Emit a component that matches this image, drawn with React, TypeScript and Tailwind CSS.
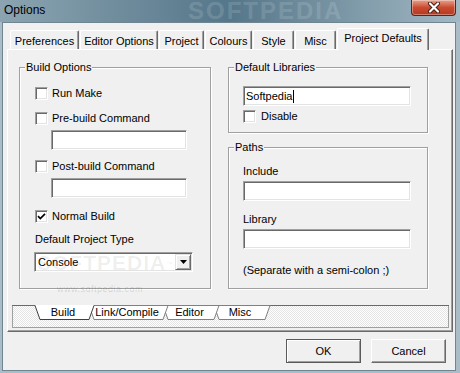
import React from "react";

const sunken =
  "border border-t-[#a0a0a0] border-l-[#a0a0a0] border-b-white border-r-white shadow-[inset_1px_1px_0_#696969,inset_-1px_-1px_0_#e3e3e3] bg-white";

function CheckBox({ checked = false }: { checked?: boolean }) {
  return (
    <span className={`flex h-[13px] w-[13px] shrink-0 items-center justify-center ${sunken}`}>
      {checked && (
        <svg width="9" height="9" viewBox="0 0 9 9">
          <path d="M1 4.2 L3.3 6.6 L8 1.8" fill="none" stroke="#000" strokeWidth="1.7" />
        </svg>
      )}
    </span>
  );
}

function CheckRow({ label, checked, className = "" }: { label: string; checked?: boolean; className?: string }) {
  return (
    <div className={`flex h-[13px] items-center gap-[4px] ${className}`}>
      <CheckBox checked={checked} />
      <span className="leading-[13px]">{label}</span>
    </div>
  );
}

function Group({
  title,
  className = "",
  inner = "",
  children,
}: {
  title: string;
  className?: string;
  inner?: string;
  children: React.ReactNode;
}) {
  return (
    <div
      className={`flex flex-col border border-[#a0a0a0] shadow-[inset_1px_1px_0_#fff,1px_1px_0_#fff] ${className}`}
    >
      <span className="-mt-[7px] ml-[5px] w-fit bg-[#f0f0f0] px-px leading-[13px]">{title}</span>
      <div className={`flex flex-col ${inner}`}>{children}</div>
    </div>
  );
}

function TextBox({ className = "", children }: { className?: string; children?: React.ReactNode }) {
  return <div className={`flex h-[20px] items-center pl-[2px] ${sunken} ${className}`}>{children}</div>;
}

function Tab({ label, w, selected }: { label: string; w: string; selected?: boolean }) {
  if (selected) {
    return (
      <div
        className={`relative z-10 -mb-px flex h-[22px] items-center justify-center rounded-t-[2px] border-l border-t border-r border-l-white border-t-white border-r-[#696969] bg-[#f0f0f0] pb-[2px] shadow-[inset_-1px_0_0_#a0a0a0] ${w}`}
      >
        {label}
      </div>
    );
  }
  return (
    <div
      className={`flex h-[19px] items-center justify-center rounded-t-[2px] border-l border-t border-r border-l-white border-t-white border-r-[#696969] bg-[#f0f0f0] pt-[2px] shadow-[inset_-1px_0_0_#a0a0a0] ${w}`}
    >
      {label}
    </div>
  );
}

function Button({ label, isDefault }: { label: string; isDefault?: boolean }) {
  const look = isDefault
    ? "border border-[#5a5a5a] shadow-[inset_1px_1px_0_#fff,inset_-1px_-1px_0_#a0a0a0]"
    : "border border-t-white border-l-white border-b-[#696969] border-r-[#696969] shadow-[inset_-1px_-1px_0_#a0a0a0]";
  return (
    <div className={`flex h-[24px] w-[75px] items-center justify-center bg-[#f0f0f0] ${look}`}>{label}</div>
  );
}

export default function App() {
  return (
    <div className="flex h-[373px] w-[460px] flex-col bg-[#a9bcc7] font-['Liberation_Sans',Arial,sans-serif] text-[11px] text-black">
      {/* title bar */}
      <div className="relative flex h-[22px] shrink-0 items-start justify-between bg-gradient-to-r from-[#8ca4b1] via-[#55778a] to-[#a3b8c3] pl-[4px]">
        <span className="mt-[3px] text-[12px] leading-[15px]">Options</span>
        <span className="pointer-events-none absolute left-[188px] top-0 text-[24px] font-bold leading-[22px] tracking-[2px] text-white/15">
          SOFTPEDIA
        </span>
        <div className="mr-[4px] flex h-[16px] w-[45px] items-center justify-center rounded-b-[4px] border border-t-0 border-[#5b2418] bg-gradient-to-b from-[#e6a08c] via-[#c94a30] to-[#b43a22] shadow-[inset_0_0_0_1px_rgba(255,255,255,0.35)]">
          <svg width="14" height="11" viewBox="0 0 14 11">
            <path d="M3 1.5 L11 9.5 M11 1.5 L3 9.5" stroke="#4a1a10" strokeWidth="4" strokeLinecap="round" />
            <path d="M3 1.5 L11 9.5 M11 1.5 L3 9.5" stroke="#fff" strokeWidth="2.2" strokeLinecap="round" />
          </svg>
        </div>
      </div>

      {/* client area */}
      <div className="mb-[2px] ml-[2px] mr-[4px] flex flex-1 flex-col border border-[#6f8592] bg-[#f0f0f0]">
        {/* tabs */}
        <div className="ml-[7px] mt-[5px] flex h-[21px] items-end gap-px">
          <Tab label="Preferences" w="w-[69px]" />
          <Tab label="Editor Options" w="w-[78px]" />
          <Tab label="Project" w="w-[45px]" />
          <Tab label="Colours" w="w-[47px]" />
          <Tab label="Style" w="w-[41px]" />
          <Tab label="Misc" w="w-[41px]" />
          <Tab label="Project Defaults" w="w-[92px]" selected />
        </div>

        {/* tab page */}
        <div className="ml-[4px] flex h-[283px] w-[446px] flex-col border border-l-white border-t-white border-b-[#696969] border-r-[#696969] pl-[11px] pt-[17px] shadow-[inset_-1px_-1px_0_#a0a0a0]">
          <div className="flex items-start gap-[17px]">
            <Group title="Build Options" className="relative h-[222px] w-[192px]" inner="pl-[15px]">
              <CheckRow label="Run Make" className="mt-[13px]" />
              <CheckRow label="Pre-build Command" className="mt-[12px]" />
              <TextBox className="ml-[16px] mt-[5px] w-[136px]" />
              <CheckRow label="Post-build Command" className="mt-[10px]" />
              <TextBox className="ml-[16px] mt-[5px] w-[136px]" />
              <CheckRow label="Normal Build" checked className="mt-[12px]" />
              <span className="mt-[10px] leading-[13px]">Default Project Type</span>
              <div className={`relative -ml-px mt-[6px] flex h-[20px] w-[159px] items-center justify-between pl-[3px] pr-[1px] ${sunken}`}>
                <span>Console</span>
                <span className="pointer-events-none absolute left-[2px] top-[0px] text-[21px] font-bold leading-[20px] tracking-[1px] text-black/[0.07]">
                  SOFTPEDIA<sup className="text-[7px]">™</sup>
                </span>
                <div className="flex h-[16px] w-[16px] items-center justify-center border border-t-[#e3e3e3] border-l-[#e3e3e3] border-b-[#696969] border-r-[#696969] bg-[#f0f0f0] shadow-[inset_1px_1px_0_#fff,inset_-1px_-1px_0_#a0a0a0]">
                  <svg width="7" height="4" viewBox="0 0 7 4">
                    <path d="M0 0 H7 L3.5 4 Z" fill="#000" />
                  </svg>
                </div>
              </div>
              <span className="pointer-events-none absolute bottom-[-8px] left-[37px] text-[9px] tracking-[0.5px] text-black/15">
                www.softpedia.com
              </span>
            </Group>

            <div className="flex flex-col gap-[14px]">
              <Group title="Default Libraries" className="h-[66px] w-[200px]" inner="pl-[14px]">
                <TextBox className="mt-[12px] w-[168px]">
                  <span>Softpedia</span>
                  <span className="ml-px h-[13px] w-px bg-black" />
                </TextBox>
                <div className="mt-[4px] flex h-[13px] items-center gap-[5px]">
                  <CheckBox />
                  <span>Disable</span>
                </div>
              </Group>
              <Group title="Paths" className="h-[142px] w-[200px]" inner="pl-[14px]">
                <span className="mt-[11px] leading-[13px]">Include</span>
                <TextBox className="mt-[3px] w-[168px]" />
                <span className="mt-[12px] leading-[13px]">Library</span>
                <TextBox className="mt-[3px] w-[168px]" />
                <span className="mt-[15px] leading-[13px]">(Separate with a semi-colon ;)</span>
              </Group>
            </div>
          </div>

          {/* sheet tabs */}
          <div className="relative -ml-[7px] mb-[3px] mt-auto h-[23px] w-[437px] bg-[image:repeating-conic-gradient(#e4e4e4_0%_25%,#ffffff_0%_50%)] bg-[length:2px_2px]">
            <svg className="absolute inset-0" width="437" height="23" viewBox="0 0 437 23">
              <rect x="0.5" y="0.5" width="436" height="22" fill="none" stroke="#a0a0a0" />
              <line x1="0" y1="0.5" x2="437" y2="0.5" stroke="#696969" />
              <polygon points="202,0.5 207,14.5 253,14.5 258,0.5" fill="#fff" stroke="#808080" />
              <polygon points="151,0.5 156,14.5 202,14.5 207,0.5" fill="#fff" stroke="#808080" />
              <polygon points="77,0.5 82,14.5 151,14.5 156,0.5" fill="#fff" stroke="#808080" />
              <polygon points="23,0 28,14.5 77,14.5 82,0" fill="#fff" />
              <polyline points="23,0.5 28,14.5 77,14.5 82,0.5" fill="none" stroke="#404040" />
            </svg>
            <div className="relative flex pt-px leading-[13px]">
              <span className="ml-[30px] w-[42px] text-center">Build</span>
              <span className="ml-[8px] w-[70px] text-center">Link/Compile</span>
              <span className="ml-[5px] w-[45px] text-center">Editor</span>
              <span className="ml-[10px] w-[36px] text-center">Misc</span>
            </div>
          </div>
        </div>

        {/* buttons */}
        <div className="mt-[7px] flex justify-end gap-[10px] pr-[9px]">
          <Button label="OK" isDefault />
          <Button label="Cancel" />
        </div>
      </div>
    </div>
  );
}
